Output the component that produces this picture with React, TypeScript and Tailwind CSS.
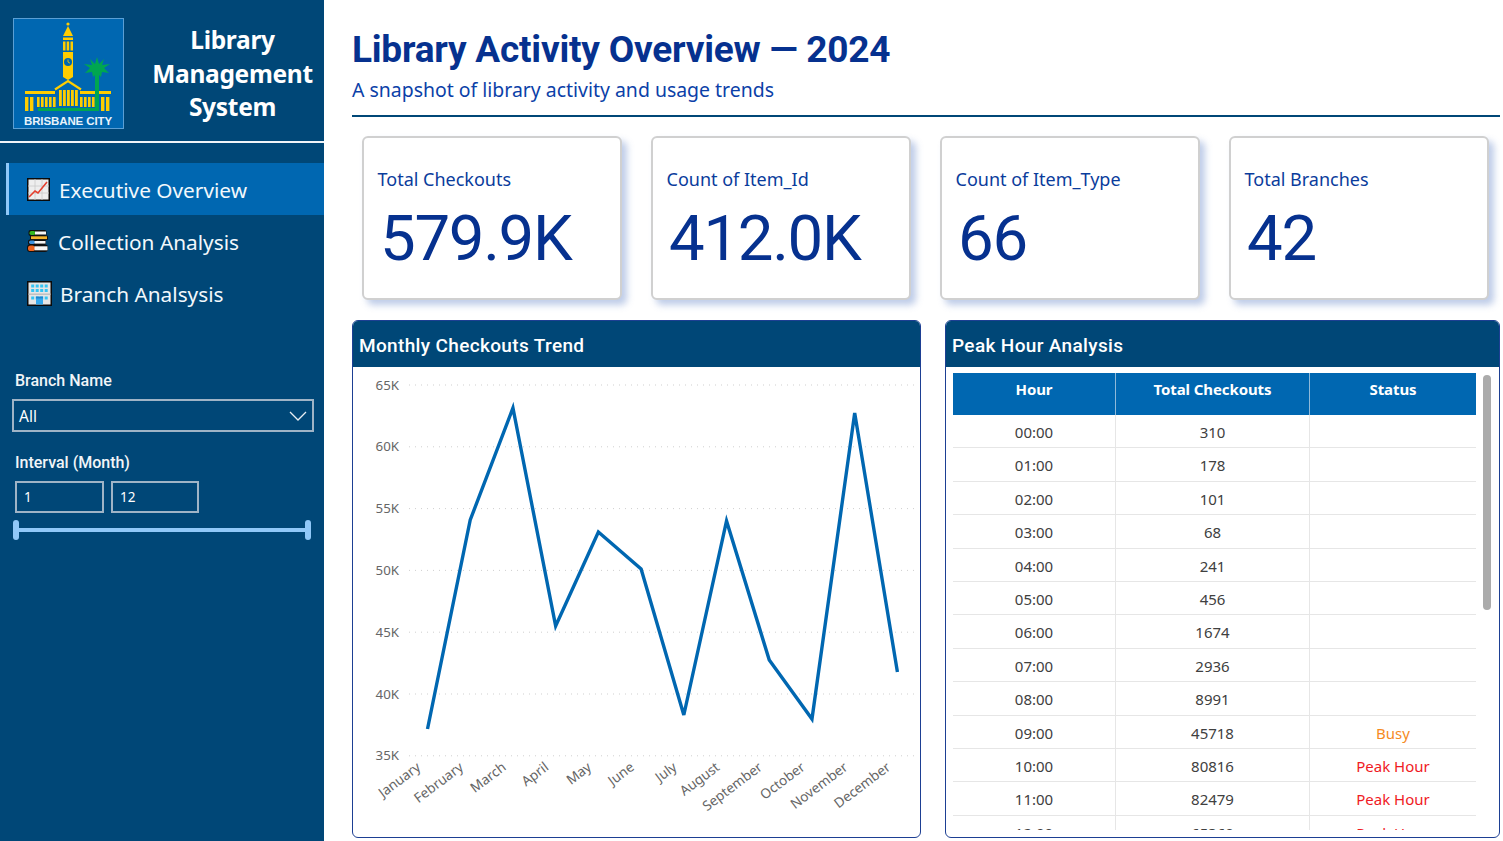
const kpis = [
  { label: "Total Checkouts", value: "579.9K" },
  { label: "Count of Item_Id", value: "412.0K" },
  { label: "Count of Item_Type", value: "66" },
  { label: "Total Branches", value: "42" },
];

const rows = [
  ["00:00", "310", ""],
  ["01:00", "178", ""],
  ["02:00", "101", ""],
  ["03:00", "68", ""],
  ["04:00", "241", ""],
  ["05:00", "456", ""],
  ["06:00", "1674", ""],
  ["07:00", "2936", ""],
  ["08:00", "8991", ""],
  ["09:00", "45718", "Busy"],
  ["10:00", "80816", "Peak Hour"],
  ["11:00", "82479", "Peak Hour"],
  ["12:00", "65360", "Peak Hour"],
];

const months = ["January", "February", "March", "April", "May", "June", "July", "August", "September", "October", "November", "December"];
// page coordinates of the line, shifted into the svg below
const values = [729, 520, 408, 626, 532, 569, 715, 521, 660, 719, 413, 672];
const ticks = ["65K", "60K", "55K", "50K", "45K", "40K", "35K"];

function Logo() {
  const yellow = "#ffcd00";
  return (
    <svg width="111" height="111" viewBox="0 0 111 111" className="shrink-0">
      <rect x="0.5" y="0.5" width="110" height="110" fill="#0067b1" stroke="#5b9fd4" />
      <circle cx="55" cy="6" r="1.6" fill={yellow} />
      <path d="M55 8 L60 18 H50 Z" fill={yellow} />
      <rect x="50" y="19.5" width="10" height="2.5" fill={yellow} />
      <path d="M50 23.500h2.500v9H50zM53.700 23.500h2.500v9h-2.500zM57.500 23.500H60v9h-2.500z" fill={yellow} />
      <path d="M50 34 H60 V59 L55 62 L50 59 Z" fill={yellow} />
      <circle cx="55" cy="44" r="4" fill="#0067b1" />
      <path d="M55 41.500V44L57 45.200" stroke={yellow} strokeWidth="0.8" fill="none" />
      <path d="M42 71.500 L55 63 L68 71.500" stroke={yellow} strokeWidth="2.200" fill="none" />
      <rect x="12" y="73" width="30" height="3" fill={yellow} />
      <rect x="67" y="73" width="31" height="3" fill={yellow} />
      {[12, 17, 24, 28, 32, 36, 40].map((x) => (
        <rect key={x} x={x} y="79" width={x < 20 ? 3.4 : 2.6} height={x < 20 ? 14 : 10} fill={yellow} />
      ))}
      {[46, 50, 54, 58, 62].map((x) => (
        <rect key={x} x={x} y="72" width="2.800" height="16" fill={yellow} />
      ))}
      {[67, 71, 75, 79].map((x) => (
        <rect key={x} x={x} y="79" width="2.600" height="10" fill={yellow} />
      ))}
      {[88, 93].map((x) => (
        <rect key={x} x={x} y="79" width="3.400" height="14" fill={yellow} />
      ))}
      <path d="M25 90 H82 V55 H86 V93 H25 Z" fill="#00a651" />
      <path d="M84 39 L86 46 L91 41 L89 47 L97 46 L91 50 L96 55 L89 54 L88 59 L84 55 L80 59 L79 54 L72 55 L77 50 L71 46 L79 47 L77 41 L82 46 Z" fill="#00a651" />
      <text x="55" y="107" textAnchor="middle" fontSize="11.500" fontWeight="700" letterSpacing="-0.1" fill="#eaf3fa" fontFamily="'Liberation Sans', sans-serif">
        BRISBANE CITY
      </text>
    </svg>
  );
}

function ChartIcon() {
  return (
    <svg width="23" height="23" viewBox="0 0 23 23" className="shrink-0">
      <rect x="0.750" y="0.750" width="21.500" height="21.500" fill="#eeeeee" stroke="#0a0a0a" strokeWidth="1.500" />
      <path d="M8 1v21M15 1v21M1 8h21M1 15h21" stroke="#c9c9c9" strokeWidth="0.800" />
      <path d="M2 19 L8 13 L11 15 L20 4" stroke="#e53f2e" strokeWidth="1.600" fill="none" />
    </svg>
  );
}

function BooksIcon() {
  return (
    <svg width="22" height="22" viewBox="0 0 22 22" className="shrink-0">
      <rect x="1.500" y="0" width="18" height="6" rx="2" fill="#101010" />
      <rect x="2.500" y="1" width="6" height="4" rx="1.800" fill="#35b620" />
      <rect x="8" y="1.500" width="11" height="3" fill="#f5f5f5" />
      <rect x="3" y="5.500" width="18" height="4.500" rx="1" fill="#101010" />
      <rect x="4" y="6.300" width="16" height="2.800" fill="#f4b32a" />
      <rect x="1" y="9.500" width="18" height="5.500" rx="2" fill="#101010" />
      <rect x="2" y="10.500" width="6" height="3.500" rx="1.700" fill="#3d93e0" />
      <rect x="7.500" y="11" width="11" height="2.600" fill="#f5f5f5" />
      <rect x="0" y="14.500" width="21" height="7.500" rx="3" fill="#101010" />
      <rect x="1" y="15.500" width="7" height="5.500" rx="2.600" fill="#f0641e" />
      <rect x="7.500" y="16.300" width="13" height="4" fill="#f6f6f6" />
    </svg>
  );
}

function BuildingIcon() {
  const windows = [3.500, 8, 12.500, 17];
  return (
    <svg width="25" height="25" viewBox="0 0 25 25" className="shrink-0">
      <rect x="0.750" y="0.750" width="23.500" height="23.500" fill="#e6e6e6" stroke="#0a0a0a" strokeWidth="1.500" />
      {[3.500, 8, 15.500].flatMap((y) =>
        windows.map((x) => <rect key={`${x}-${y}`} x={x + 0.7} y={y} width="3" height="3" fill="#35c4f4" />)
      )}
      <rect x="1.500" y="12.500" width="22" height="1.400" fill="#bdbdbd" />
      <rect x="9" y="17" width="7" height="6.500" fill="#35a9ee" />
      <rect x="9" y="15.500" width="7" height="2" fill="#1f86d0" />
    </svg>
  );
}

function LineChart() {
  // svg sits at page x 353, y 367
  const ox = 353;
  const oy = 367;
  const xAt = (i: number) => 427.5 + i * 42.72 - ox;
  const pts = values.map((v, i) => `${xAt(i)},${v - oy}`).join(" ");
  return (
    <svg width="567" height="470" viewBox="0 0 567 470" className="block font-['Noto_Sans']">
      {ticks.map((t, i) => {
        const y = 385 + i * 61.8 - oy;
        return (
          <g key={t}>
            <text x="46" y={y + 4.500} textAnchor="end" fontSize="13.300" fill="#666666">{t}</text>
            <line x1="56" x2="562" y1={y} y2={y} stroke="#cfcfcf" strokeWidth="1" strokeDasharray="1 5" />
          </g>
        );
      })}
      <polyline points={pts} fill="none" stroke="#0067b1" strokeWidth="3.400" strokeLinejoin="miter" />
      {months.map((m, i) => (
        <text
          key={m}
          x={xAt(i) - 6}
          y={769 - oy}
          textAnchor="end"
          fontSize="13.600"
          fill="#666666"
          transform={`rotate(-37 ${xAt(i) - 6} ${769 - oy})`}
        >
          {m}
        </text>
      ))}
    </svg>
  );
}

function PanelHeader({ title }: { title: string }) {
  return (
    <div className="h-[46px] shrink-0 bg-[#004777] px-[6px] pt-[4px] flex items-center text-white font-['Roboto'] font-medium text-[19px] tracking-[0.35px]">
      {title}
    </div>
  );
}

export default function App() {
  return (
    <div className="flex h-[841px] w-[1503px] overflow-hidden bg-white font-['Noto_Sans',sans-serif]">
      {/* sidebar */}
      <aside className="w-[324px] shrink-0 bg-[#004777] text-white flex flex-col">
        <div className="h-[143px] shrink-0 border-b-2 border-[#f0f4f8] flex pl-[13px] pt-[18px]">
          <Logo />
          <div className="flex-1 pl-[28px] pr-[11px] pt-[5px] text-center font-['Noto_Sans'] font-bold text-[24.500px] leading-[33.500px] tracking-[-0.3px]">
            Library<br />Management<br />System
          </div>
        </div>

        <nav className="mt-[20px] flex flex-col text-[20.800px]">
          <div className="h-[52px] ml-[6px] bg-[#0067b1] border-l-[3px] border-[#90c8f8] pl-[18px] flex items-center gap-[9px] text-[#f2f8fc]">
            <ChartIcon /> <span className="pt-[3px]">Executive Overview</span>
          </div>
          <div className="h-[52px] pl-[27px] flex items-center gap-[9px] text-[#f2f8fc]">
            <BooksIcon /> <span className="pt-[3px]">Collection Analysis</span>
          </div>
          <div className="h-[52px] pl-[27px] flex items-center gap-[8px] text-[#f2f8fc]">
            <BuildingIcon /> <span className="pt-[3px]">Branch Analsysis</span>
          </div>
        </nav>

        <div className="mt-[52px] px-[12px] font-['Roboto']">
          <div className="pl-[3px] text-[16px] font-medium leading-[20px] text-[#f1f5f8]">Branch Name</div>
          <div className="mt-[8px] h-[33px] w-[302px] border-2 border-[#9fb4c6] flex items-center justify-between pl-[5px] pr-[5px] text-[15.500px] font-['Noto_Sans']">
            <span className="pt-[3px]">All</span>
            <svg width="18" height="10" viewBox="0 0 18 10" className="shrink-0">
              <path d="M1 1 L9 9 L17 1" fill="none" stroke="#e8eef3" strokeWidth="1.300" />
            </svg>
          </div>
          <div className="mt-[21px] pl-[3px] text-[16px] font-medium leading-[20px] text-[#f1f5f8]">Interval (Month)</div>
          <div className="mt-[8px] ml-[3px] flex gap-[7px] text-[13.500px] font-['Noto_Sans']">
            <div className="h-[32px] w-[89px] border-2 border-[#9fb4c6] flex items-center pl-[7px]">1</div>
            <div className="h-[32px] w-[88px] border-2 border-[#9fb4c6] flex items-center pl-[7px]">12</div>
          </div>
          <div className="relative mt-[7px] ml-[1px] h-[20px] w-[298px]">
            <div className="absolute left-[2px] right-[2px] top-[8px] h-[4px] bg-[#90c8f8]" />
            <div className="absolute left-0 top-0 h-[20px] w-[6px] rounded-[3px] bg-[#90c8f8]" />
            <div className="absolute right-0 top-0 h-[20px] w-[6px] rounded-[3px] bg-[#90c8f8]" />
          </div>
        </div>
      </aside>

      {/* main */}
      <main className="flex-1 pl-[28px] pr-[3px] flex flex-col">
        <div className="pt-[27px] h-[117px] shrink-0 border-b-2 border-[#004777]">
          <h1 className="font-['Roboto'] font-bold text-[37px] leading-[45px] tracking-[-0.22px] text-[#06318f]">Library Activity Overview — 2024</h1>
          <p className="text-[19.450px] leading-[27px] mt-[4px] text-[#0b3fa8]">A snapshot of library activity and usage trends</p>
        </div>

        <div className="mt-[19px] pl-[10px] flex gap-[29px]">
          {kpis.map((k) => (
            <div key={k.label} className="h-[164px] w-[260px] rounded-[6px] border-2 border-[#d0d0d0] bg-white shadow-[5px_5px_7px_rgba(70,110,190,0.35)] pl-[13.500px] pt-[28px]">
              <div className="text-[18px] leading-[26px] text-[#0a3c9c]">{k.label}</div>
              <div className="mt-[9px] pl-[2.500px] font-['Roboto'] text-[63.500px] leading-[76px] text-[#06318f] tracking-[-1.300px]">{k.value}</div>
            </div>
          ))}
        </div>

        <div className="mt-[20px] flex gap-[24px]">
          <section className="w-[569px] h-[518px] rounded-[6px] border border-[#1d3f93] overflow-hidden flex flex-col">
            <PanelHeader title="Monthly Checkouts Trend" />
            <LineChart />
          </section>

          <section className="w-[555px] h-[518px] rounded-[6px] border border-[#1d3f93] overflow-hidden flex flex-col">
            <PanelHeader title="Peak Hour Analysis" />
            <div className="relative mt-[6px] ml-[7px] w-[523px] h-[457px] overflow-hidden text-[15px]">
              <div className="grid grid-cols-[163px_194px_166px] h-[42px] bg-[#0067b1] text-white font-bold text-[15px] tracking-[-0.1px]">
                <div className="flex justify-center pt-[5px] border-r border-[#8fb9d9]">Hour</div>
                <div className="flex justify-center pt-[5px] border-r border-[#8fb9d9]">Total Checkouts</div>
                <div className="flex justify-center pt-[5px]">Status</div>
              </div>
              {rows.map((r) => (
                <div key={r[0]} className="grid grid-cols-[163px_194px_166px] h-[33.420px] border-b border-[#e6e6e6] text-[#404040] leading-[35px]">
                  <div className="text-center border-r border-[#e6e6e6]">{r[0]}</div>
                  <div className="text-center border-r border-[#e6e6e6]">{r[1]}</div>
                  <div className={`text-center ${r[2] === "Busy" ? "text-[#f68b1f]" : "text-[#f01a24]"}`}>{r[2]}</div>
                </div>
              ))}
            </div>
            {/* scrollbar thumb */}
            <div className="absolute left-[1483px] top-[375px] h-[235px] w-[8px] rounded-[4px] bg-[#ababab]" />
          </section>
        </div>
      </main>
    </div>
  );
}
